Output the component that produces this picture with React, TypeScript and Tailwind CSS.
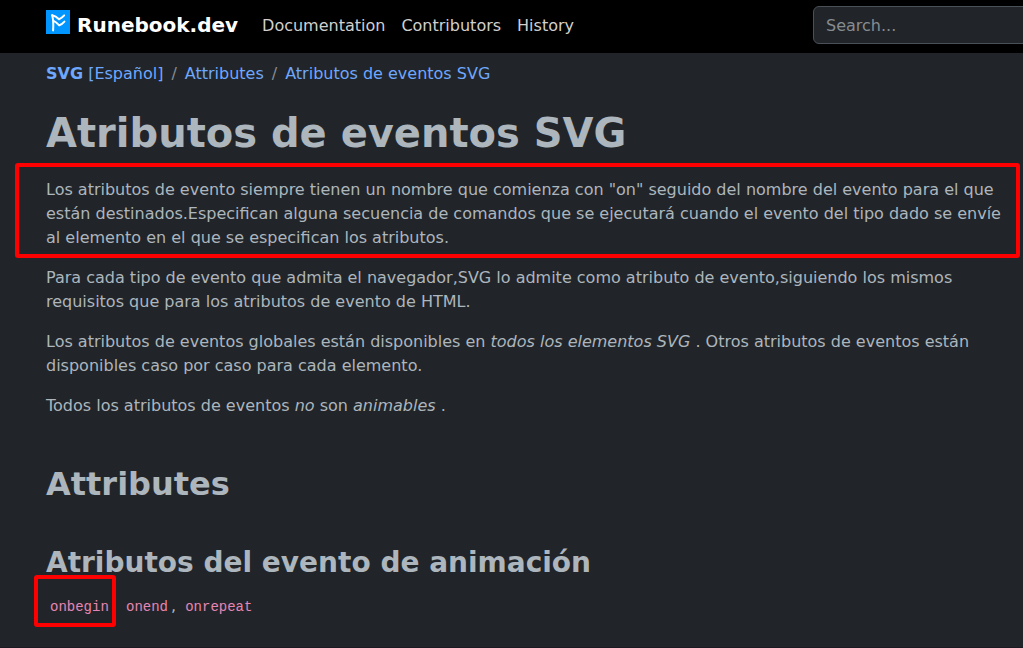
import type { ReactNode } from "react";

const navLinks = ["Documentation", "Contributors", "History"];

function Logo() {
  return (
    <svg className="-mt-1.5 size-6 shrink-0" viewBox="0 0 24 24" aria-hidden="true">
      <rect width="24" height="24" fill="#0095ff" />
      <g fill="none" stroke="#fff" strokeLinecap="round" strokeLinejoin="round">
        <path d="M6.2 5.2 C7.2 9 7.5 15 7.1 20.4" strokeWidth="2" />
        <path d="M6.2 5.2 C8.8 5.8 11.2 7.4 13 9.2 C15 8.4 16.8 7 18.2 5.4" strokeWidth="2" />
        <path d="M7.6 10.8 C10 11.8 11.6 13.6 13.2 15.4 C15.2 14.6 17 13.2 18.4 11.6" strokeWidth="2" />
      </g>
    </svg>
  );
}

function Header() {
  return (
    <header className="flex h-[53px] items-center overflow-hidden bg-black pb-[3px] pl-[46px]">
      <a href="#home" className="flex items-center gap-[7px] text-[20px] leading-[30px] font-bold text-white">
        <Logo />
        Runebook.dev
      </a>
      <nav className="ml-6 flex gap-4 pt-0.5">
        {navLinks.map((label) => (
          <a key={label} href={`#${label.toLowerCase()}`} className="text-[#d0d0d0]">
            {label}
          </a>
        ))}
      </nav>
      <input
        type="search"
        aria-label="Search"
        placeholder="Search..."
        className="-mr-2.5 ml-auto h-[38px] w-[220px] shrink-0 rounded-md border border-[#495057] bg-[#212529] px-3 text-[#adb5bd] placeholder:text-[#868c92]"
      />
    </header>
  );
}

function Code({ children }: { children: ReactNode }) {
  return (
    <a href="#attribute" className="pr-[3px] pl-1 font-['Liberation_Mono',monospace] text-[14px] text-[#e685b5]">
      {children}
    </a>
  );
}

export default function App() {
  return (
    <div className="min-h-screen overflow-x-hidden border-b border-[#1d1922] bg-[#212529] font-['DejaVu_Sans',sans-serif] text-[16px] leading-6 text-[#adb5bd]">
      <Header />
      <main className="pt-[9px] pr-3 pl-[46px]">
        <nav aria-label="Breadcrumb" className="flex gap-2 text-[#6ea8fe]">
          <span>
            <a href="#svg" className="font-bold">SVG</a> <a href="#es">[Español]</a>
          </span>
          <span className="text-[#868c92]">/</span>
          <a href="#attributes">Attributes</a>
          <span className="text-[#868c92]">/</span>
          <a href="#events">Atributos de eventos SVG</a>
        </nav>
        <h1 className="mt-[23px] mb-[21px] text-[40px] leading-[48px] font-bold">Atributos de eventos SVG</h1>
        <div className="relative mb-4">
          <p>
            Los atributos de evento siempre tienen un nombre que comienza con "on" seguido del nombre del evento para el
            que están destinados.Especifican alguna secuencia de comandos que se ejecutará cuando el evento del tipo
            dado se envíe al elemento en el que se especifican los atributos.
          </p>
          <div className="pointer-events-none absolute -top-[15px] -right-[9px] -bottom-2 -left-[31px] rounded-[3px] border-4 border-[#ff0000]" />
        </div>
        <p className="mb-4">
          Para cada tipo de evento que admita el navegador,SVG lo admite como atributo de evento,siguiendo los mismos
          requisitos que para los atributos de evento de HTML.
        </p>
        <p className="mb-4">
          Los atributos de eventos globales están disponibles en <em>todos los elementos SVG</em> . Otros atributos de
          eventos están disponibles caso por caso para cada elemento.
        </p>
        <p>
          Todos los atributos de eventos <em>no</em> son <em>animables</em> .
        </p>
        <h2 className="mt-[47px] text-[32px] leading-[38px] font-bold">Attributes</h2>
        <h3 className="mt-[43px] mb-3.5 text-[28px] leading-[34px] font-bold">Atributos del evento de animación</h3>
        <p>
          <span className="relative">
            <Code>onbegin</Code>,
            <span className="pointer-events-none absolute -top-[21px] right-px -bottom-3 -left-3 rounded-[3px] border-4 border-[#ff0000]" />
          </span>{" "}
          <Code>onend</Code>, <Code>onrepeat</Code>
        </p>
      </main>
    </div>
  );
}
